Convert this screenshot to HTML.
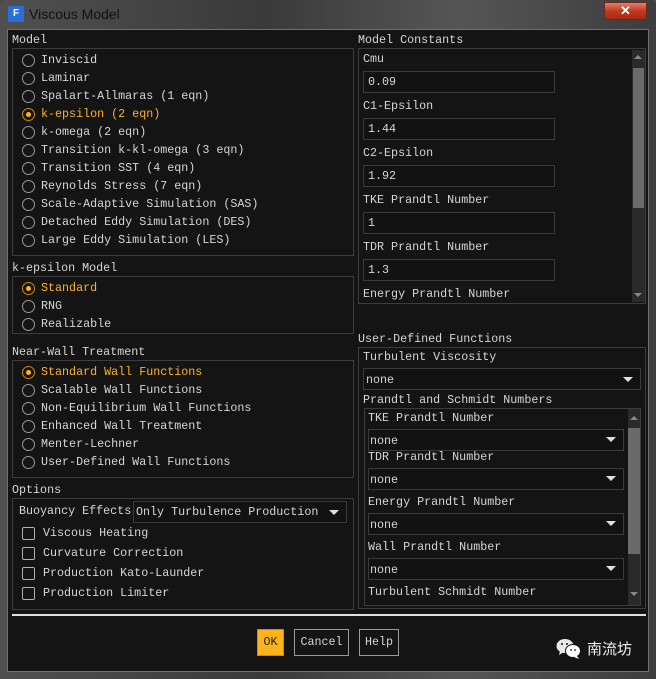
<!DOCTYPE html>
<html><head><meta charset="utf-8"><style>
*{margin:0;padding:0;box-sizing:border-box}
body{width:656px;height:679px;overflow:hidden;background:#4a4a4a;font-family:"Liberation Mono","Noto Sans CJK SC",monospace;font-size:11.7px;color:#d6d6d6;position:relative}
.a{position:absolute;white-space:nowrap;line-height:14px}
.box{position:absolute;border:1px solid #3c3c3c}
.r{position:absolute;width:13px;height:13px;border:1.5px solid #9a9a9a;border-radius:50%}
.r.on{border-color:#c98a10}
.r.on:after{content:"";position:absolute;left:2.5px;top:2.5px;width:5px;height:5px;border-radius:50%;background:#ffb31a}
.o{color:#ffb31a}
.in{position:absolute;border:1px solid #3a3a3a;background:#121212}
.cb{position:absolute;width:13px;height:13px;border:1.5px solid #b0b0b0;border-radius:2px}
.tri{position:absolute;width:0;height:0;border-left:5px solid transparent;border-right:5px solid transparent;border-top:5px solid #e0e0e0}
.btn{position:absolute;border:1px solid #9a9a9a;text-align:center;line-height:24px}
</style></head><body>
<div style="position:absolute;left:0;top:0;width:656px;height:679px;background:linear-gradient(90deg,#505050,#3a3a3a 40%,#555 70%,#3d3d3d);border-radius:6px 6px 0 0"></div>
<div style="position:absolute;left:8px;top:6px;width:16px;height:16px;background:#2a6fd8;color:#fff;font:bold 10px 'Liberation Sans',sans-serif;text-align:center;line-height:16px;border-radius:2px">F</div>
<div class="a" style="left:29px;top:6px;font:14px 'Liberation Sans',sans-serif;color:#111;line-height:16px">Viscous Model</div>
<div style="position:absolute;left:604px;top:2px;width:43px;height:18px;background:linear-gradient(#e08070,#c03a20 50%,#a82810);border:1px solid #6a2a20;border-radius:0 0 4px 4px;color:#fff;font:bold 13px 'Liberation Sans',sans-serif;text-align:center;line-height:16px">✕</div>
<div style="position:absolute;left:7px;top:29px;width:642px;height:643px;background:#141414;border:1px solid #707070"></div>

<!-- Model -->
<div class="a" style="left:12px;top:33px">Model</div>
<div class="box" style="left:12px;top:48px;width:342px;height:208px"></div>
<div class="r" style="left:22px;top:54px"></div><div class="a" style="left:41px;top:53px">Inviscid</div>
<div class="r" style="left:22px;top:72px"></div><div class="a" style="left:41px;top:71px">Laminar</div>
<div class="r" style="left:22px;top:90px"></div><div class="a" style="left:41px;top:89px">Spalart-Allmaras (1 eqn)</div>
<div class="r on" style="left:22px;top:108px"></div><div class="a o" style="left:41px;top:107px">k-epsilon (2 eqn)</div>
<div class="r" style="left:22px;top:126px"></div><div class="a" style="left:41px;top:125px">k-omega (2 eqn)</div>
<div class="r" style="left:22px;top:144px"></div><div class="a" style="left:41px;top:143px">Transition k-kl-omega (3 eqn)</div>
<div class="r" style="left:22px;top:162px"></div><div class="a" style="left:41px;top:161px">Transition SST (4 eqn)</div>
<div class="r" style="left:22px;top:180px"></div><div class="a" style="left:41px;top:179px">Reynolds Stress (7 eqn)</div>
<div class="r" style="left:22px;top:198px"></div><div class="a" style="left:41px;top:197px">Scale-Adaptive Simulation (SAS)</div>
<div class="r" style="left:22px;top:216px"></div><div class="a" style="left:41px;top:215px">Detached Eddy Simulation (DES)</div>
<div class="r" style="left:22px;top:234px"></div><div class="a" style="left:41px;top:233px">Large Eddy Simulation (LES)</div>

<!-- k-epsilon -->
<div class="a" style="left:12px;top:261px">k-epsilon Model</div>
<div class="box" style="left:12px;top:276px;width:342px;height:58px"></div>
<div class="r on" style="left:22px;top:282px"></div><div class="a o" style="left:41px;top:281px">Standard</div>
<div class="r" style="left:22px;top:300px"></div><div class="a" style="left:41px;top:299px">RNG</div>
<div class="r" style="left:22px;top:318px"></div><div class="a" style="left:41px;top:317px">Realizable</div>

<!-- Near wall -->
<div class="a" style="left:12px;top:345px">Near-Wall Treatment</div>
<div class="box" style="left:12px;top:360px;width:342px;height:118px"></div>
<div class="r on" style="left:22px;top:366px"></div><div class="a o" style="left:41px;top:365px">Standard Wall Functions</div>
<div class="r" style="left:22px;top:384px"></div><div class="a" style="left:41px;top:383px">Scalable Wall Functions</div>
<div class="r" style="left:22px;top:402px"></div><div class="a" style="left:41px;top:401px">Non-Equilibrium Wall Functions</div>
<div class="r" style="left:22px;top:420px"></div><div class="a" style="left:41px;top:419px">Enhanced Wall Treatment</div>
<div class="r" style="left:22px;top:438px"></div><div class="a" style="left:41px;top:437px">Menter-Lechner</div>
<div class="r" style="left:22px;top:456px"></div><div class="a" style="left:41px;top:455px">User-Defined Wall Functions</div>

<!-- Options -->
<div class="a" style="left:12px;top:483px">Options</div>
<div class="box" style="left:12px;top:498px;width:342px;height:112px"></div>
<div class="a" style="left:19px;top:504px">Buoyancy Effects</div>
<div class="in" style="left:133px;top:501px;width:214px;height:22px"></div>
<div class="a" style="left:136px;top:505px">Only Turbulence Production</div>
<div class="tri" style="left:329px;top:510px"></div>
<div class="cb" style="left:22px;top:527px"></div><div class="a" style="left:43px;top:526px">Viscous Heating</div>
<div class="cb" style="left:22px;top:547px"></div><div class="a" style="left:43px;top:546px">Curvature Correction</div>
<div class="cb" style="left:22px;top:567px"></div><div class="a" style="left:43px;top:566px">Production Kato-Launder</div>
<div class="cb" style="left:22px;top:587px"></div><div class="a" style="left:43px;top:586px">Production Limiter</div>

<!-- Model constants -->
<div class="a" style="left:358px;top:33px">Model Constants</div>
<div class="box" style="left:358px;top:48px;width:288px;height:256px"></div>
<div style="position:absolute;left:632px;top:50px;width:13px;height:252px;background:#2a2a2a"></div>
<div style="position:absolute;left:633px;top:68px;width:11px;height:140px;background:#6a6a6a"></div>
<div style="position:absolute;left:634px;top:55px;border-left:4px solid transparent;border-right:4px solid transparent;border-bottom:4px solid #888"></div>
<div style="position:absolute;left:634px;top:293px;border-left:4px solid transparent;border-right:4px solid transparent;border-top:4px solid #888"></div>
<div class="a" style="left:363px;top:52px">Cmu</div>
<div class="in" style="left:363px;top:71px;width:192px;height:22px"></div><div class="a" style="left:368px;top:75px">0.09</div>
<div class="a" style="left:363px;top:99px">C1-Epsilon</div>
<div class="in" style="left:363px;top:118px;width:192px;height:22px"></div><div class="a" style="left:368px;top:122px">1.44</div>
<div class="a" style="left:363px;top:146px">C2-Epsilon</div>
<div class="in" style="left:363px;top:165px;width:192px;height:22px"></div><div class="a" style="left:368px;top:169px">1.92</div>
<div class="a" style="left:363px;top:193px">TKE Prandtl Number</div>
<div class="in" style="left:363px;top:212px;width:192px;height:22px"></div><div class="a" style="left:368px;top:216px">1</div>
<div class="a" style="left:363px;top:240px">TDR Prandtl Number</div>
<div class="in" style="left:363px;top:259px;width:192px;height:22px"></div><div class="a" style="left:368px;top:263px">1.3</div>
<div class="a" style="left:363px;top:287px">Energy Prandtl Number</div>

<!-- UDF -->
<div class="a" style="left:358px;top:332px">User-Defined Functions</div>
<div class="box" style="left:358px;top:347px;width:288px;height:262px"></div>
<div class="a" style="left:363px;top:350px">Turbulent Viscosity</div>
<div class="in" style="left:363px;top:368px;width:278px;height:22px"></div><div class="a" style="left:366px;top:373px">none</div>
<div class="tri" style="left:623px;top:377px"></div>
<div class="a" style="left:363px;top:393px">Prandtl and Schmidt Numbers</div>
<div class="box" style="left:364px;top:408px;width:277px;height:198px"></div>
<div style="position:absolute;left:628px;top:409px;width:12px;height:196px;background:#2a2a2a"></div>
<div style="position:absolute;left:628px;top:428px;width:12px;height:126px;background:#6a6a6a"></div>
<div style="position:absolute;left:630px;top:416px;border-left:4px solid transparent;border-right:4px solid transparent;border-bottom:4px solid #888"></div>
<div style="position:absolute;left:630px;top:592px;border-left:4px solid transparent;border-right:4px solid transparent;border-top:4px solid #888"></div>
<div class="a" style="left:368px;top:411px">TKE Prandtl Number</div>
<div class="in" style="left:368px;top:429px;width:256px;height:22px"></div><div class="a" style="left:370px;top:434px">none</div><div class="tri" style="left:606px;top:437px"></div>
<div class="a" style="left:368px;top:450px">TDR Prandtl Number</div>
<div class="in" style="left:368px;top:468px;width:256px;height:22px"></div><div class="a" style="left:370px;top:473px">none</div><div class="tri" style="left:606px;top:476px"></div>
<div class="a" style="left:368px;top:495px">Energy Prandtl Number</div>
<div class="in" style="left:368px;top:513px;width:256px;height:22px"></div><div class="a" style="left:370px;top:518px">none</div><div class="tri" style="left:606px;top:521px"></div>
<div class="a" style="left:368px;top:540px">Wall Prandtl Number</div>
<div class="in" style="left:368px;top:558px;width:256px;height:22px"></div><div class="a" style="left:370px;top:563px">none</div><div class="tri" style="left:606px;top:566px"></div>
<div class="a" style="left:368px;top:585px">Turbulent Schmidt Number</div>

<!-- bottom -->
<div style="position:absolute;left:12px;top:614px;width:634px;height:2px;background:#e0e0e0"></div>
<div class="btn" style="left:257px;top:629px;width:27px;height:27px;background:#ffb31a;border-color:#d08a00;color:#222">OK</div>
<div class="btn" style="left:294px;top:629px;width:55px;height:27px">Cancel</div>
<div class="btn" style="left:359px;top:629px;width:40px;height:27px">Help</div>
<svg style="position:absolute;left:556px;top:638px" width="26" height="22" viewBox="0 0 26 22"><ellipse cx="9" cy="8" rx="8.5" ry="7" fill="#e8e8e8"/><path d="M4 13 L3 17 L8 14Z" fill="#e8e8e8"/><ellipse cx="17" cy="13" rx="7.5" ry="6.5" fill="#fff" stroke="#141414" stroke-width="1"/><path d="M21 18 L23 21 L18 19Z" fill="#fff"/><circle cx="6" cy="6" r="1" fill="#141414"/><circle cx="11" cy="6" r="1" fill="#141414"/><circle cx="15" cy="12" r="0.9" fill="#141414"/><circle cx="19" cy="12" r="0.9" fill="#141414"/></svg>
<div class="a" style="left:587px;top:640px;font:15px 'Noto Sans CJK SC',sans-serif;color:#f0f0f0;line-height:18px">南流坊</div>
</body></html>
